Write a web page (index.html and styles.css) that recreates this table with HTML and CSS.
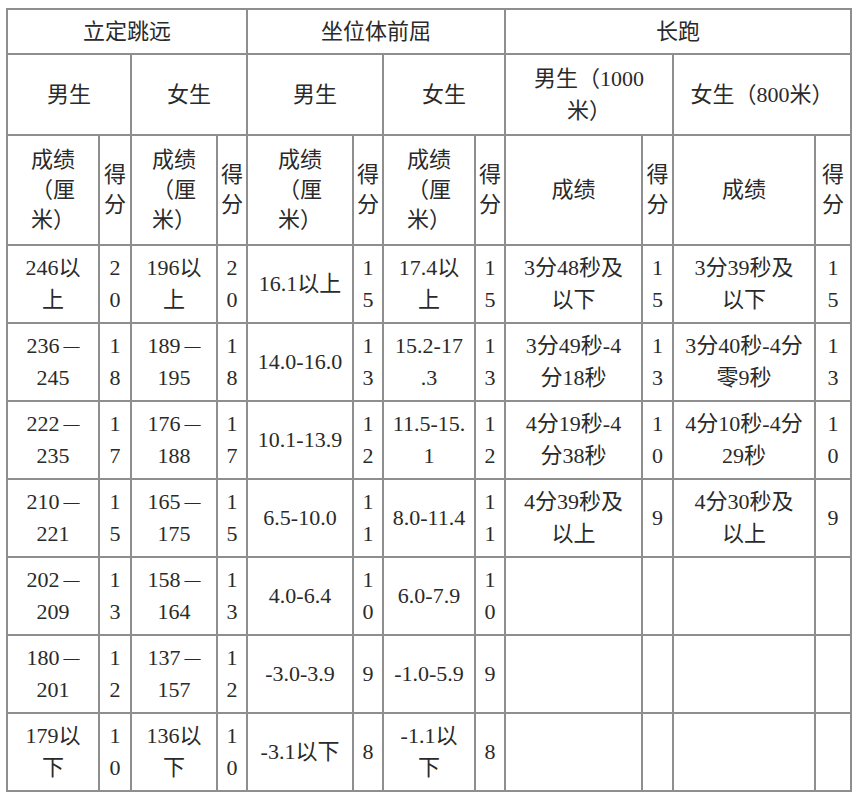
FILE: index.html
```html
<!DOCTYPE html>
<html lang="zh-CN">
<head>
<meta charset="utf-8">
<title>体育测试评分标准</title>
<link rel="stylesheet" href="styles.css">
</head>
<body>
<div class="page">
<table class="score">
  <colgroup>
    <col class="c-res-a"><col class="c-pt">
    <col class="c-res-b"><col class="c-pt-s">
    <col class="c-res-c"><col class="c-pt-s">
    <col class="c-res-a"><col class="c-pt-s">
    <col class="c-res-d"><col class="c-pt-m">
    <col class="c-res-e"><col class="c-pt-l">
  </colgroup>
  <tr class="r-top">
    <td colspan="4">立定跳远</td>
    <td colspan="4">坐位体前屈</td>
    <td colspan="4">长跑</td>
  </tr>
  <tr class="r-sex">
    <td colspan="2">男生</td>
    <td colspan="2">女生</td>
    <td colspan="2">男生</td>
    <td colspan="2">女生</td>
    <td colspan="2">男生（1000<br>米）</td>
    <td colspan="2">女生（800米）</td>
  </tr>
  <tr class="r-head">
    <td>成绩<br>（厘<br>米）</td><td>得<br>分</td>
    <td>成绩<br>（厘<br>米）</td><td>得<br>分</td>
    <td>成绩<br>（厘<br>米）</td><td>得<br>分</td>
    <td>成绩<br>（厘<br>米）</td><td>得<br>分</td>
    <td>成绩</td><td>得<br>分</td>
    <td>成绩</td><td>得<br>分</td>
  </tr>
  <tr class="r-data">
    <td>246以<br>上</td><td>2<br>0</td>
    <td>196以<br>上</td><td>2<br>0</td>
    <td>16.1以上</td><td>1<br>5</td>
    <td>17.4以<br>上</td><td>1<br>5</td>
    <td>3分48秒及<br>以下</td><td>1<br>5</td>
    <td>3分39秒及<br>以下</td><td>1<br>5</td>
  </tr>
  <tr class="r-data">
    <td>236<span class="dash">—</span><br>245</td><td>1<br>8</td>
    <td>189<span class="dash">—</span><br>195</td><td>1<br>8</td>
    <td>14.0-16.0</td><td>1<br>3</td>
    <td>15.2-17<br>.3</td><td>1<br>3</td>
    <td>3分49秒-4<br>分18秒</td><td>1<br>3</td>
    <td>3分40秒-4分<br>零9秒</td><td>1<br>3</td>
  </tr>
  <tr class="r-data">
    <td>222<span class="dash">—</span><br>235</td><td>1<br>7</td>
    <td>176<span class="dash">—</span><br>188</td><td>1<br>7</td>
    <td>10.1-13.9</td><td>1<br>2</td>
    <td>11.5-15.<br>1</td><td>1<br>2</td>
    <td>4分19秒-4<br>分38秒</td><td>1<br>0</td>
    <td>4分10秒-4分<br>29秒</td><td>1<br>0</td>
  </tr>
  <tr class="r-data">
    <td>210<span class="dash">—</span><br>221</td><td>1<br>5</td>
    <td>165<span class="dash">—</span><br>175</td><td>1<br>5</td>
    <td>6.5-10.0</td><td>1<br>1</td>
    <td>8.0-11.4</td><td>1<br>1</td>
    <td>4分39秒及<br>以上</td><td>9</td>
    <td>4分30秒及<br>以上</td><td>9</td>
  </tr>
  <tr class="r-data">
    <td>202<span class="dash">—</span><br>209</td><td>1<br>3</td>
    <td>158<span class="dash">—</span><br>164</td><td>1<br>3</td>
    <td>4.0-6.4</td><td>1<br>0</td>
    <td>6.0-7.9</td><td>1<br>0</td>
    <td></td><td></td>
    <td></td><td></td>
  </tr>
  <tr class="r-data">
    <td>180<span class="dash">—</span><br>201</td><td>1<br>2</td>
    <td>137<span class="dash">—</span><br>157</td><td>1<br>2</td>
    <td>-3.0-3.9</td><td>9</td>
    <td>-1.0-5.9</td><td>9</td>
    <td></td><td></td>
    <td></td><td></td>
  </tr>
  <tr class="r-data">
    <td>179以<br>下</td><td>1<br>0</td>
    <td>136以<br>下</td><td>1<br>0</td>
    <td>-3.1以下</td><td>8</td>
    <td>-1.1以<br>下</td><td>8</td>
    <td></td><td></td>
    <td></td><td></td>
  </tr>
</table>
</div>
</body>
</html>
```

FILE: styles.css
```css
html, body {
  margin: 0;
  padding: 0;
  background: #ffffff;
}

.page {
  padding: 8px 0 0 6px;
}

.score {
  border-collapse: collapse;
  table-layout: fixed;
  width: 846px;
  font-family: "Liberation Serif", "Noto Sans CJK SC", serif;
  font-size: 22px;
  line-height: 32px;
  color: #2a2a2a;
}

.score td {
  border: 2px solid #8e8e8e;
  padding: 0 2px;
  text-align: center;
  vertical-align: middle;
  white-space: nowrap;
}

.dash {
  font-size: 16px;
  margin-left: 4px;
  vertical-align: 2px;
}

.c-res-a { width: 92px; }
.c-res-b { width: 86px; }
.c-res-c { width: 106px; }
.c-res-d { width: 137px; }
.c-res-e { width: 142px; }
.c-pt { width: 32px; }
.c-pt-s { width: 30px; }
.c-pt-m { width: 31px; }
.c-pt-l { width: 36px; }

.r-top { height: 45px; }
.r-sex { height: 81px; }
.r-head { height: 110px; line-height: 30px; }
.r-data { height: 78px; }
```
